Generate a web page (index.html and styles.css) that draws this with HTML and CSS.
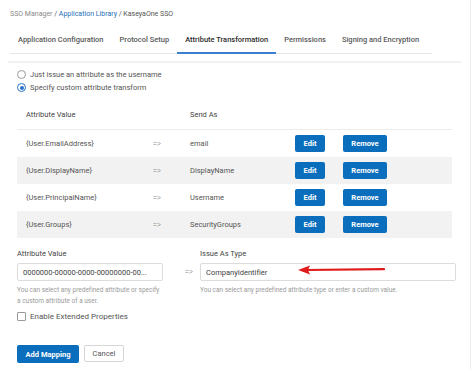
FILE: index.html
```html
<!DOCTYPE html>
<html lang="en">
<head>
    <meta charset="UTF-8">
    <title>KaseyaOne SSO - Attribute Transformation</title>
    <meta name="viewport" content="width=device-width,initial-scale=1">
    <link rel="stylesheet" href="styles.css">
</head>
<body>
    <div class="page">
        <div class="breadcrumb">
            <span class="crumb-muted">SSO Manager</span> /
            <a href="#">Application Library</a> /
            <span>KaseyaOne SSO</span>
        </div>

        <ul class="tabs">
            <li><a href="#">Application Configuration</a></li>
            <li><a href="#">Protocol Setup</a></li>
            <li class="active"><a href="#">Attribute Transformation</a></li>
            <li><a href="#">Permissions</a></li>
            <li><a href="#">Signing and Encryption</a></li>
        </ul>

        <div class="panel">
            <div class="options">
                <label class="radio"><span class="radio-dot"></span>Just issue an attribute as the username</label>
                <label class="radio"><span class="radio-dot checked"></span>Specify custom attribute transform</label>
            </div>

            <div class="mapping-table">
                <div class="map-row head">
                    <div>Attribute Value</div>
                    <div></div>
                    <div>Send As</div>
                    <div></div>
                    <div></div>
                </div>
                <div class="map-row">
                    <div>{User.EmailAddress}</div>
                    <div class="arrow">=&gt;</div>
                    <div>email</div>
                    <div><button class="btn-blue">Edit</button></div>
                    <div><button class="btn-blue">Remove</button></div>
                </div>
                <div class="map-row">
                    <div>{User.DisplayName}</div>
                    <div class="arrow">=&gt;</div>
                    <div>DisplayName</div>
                    <div><button class="btn-blue">Edit</button></div>
                    <div><button class="btn-blue">Remove</button></div>
                </div>
                <div class="map-row">
                    <div>{User.PrincipalName}</div>
                    <div class="arrow">=&gt;</div>
                    <div>Username</div>
                    <div><button class="btn-blue">Edit</button></div>
                    <div><button class="btn-blue">Remove</button></div>
                </div>
                <div class="map-row">
                    <div>{User.Groups}</div>
                    <div class="arrow">=&gt;</div>
                    <div>SecurityGroups</div>
                    <div><button class="btn-blue">Edit</button></div>
                    <div><button class="btn-blue">Remove</button></div>
                </div>
            </div>

            <div class="mapping-form">
                <div class="field">
                    <label class="field-label">Attribute Value</label>
                    <div class="input">0000000-00000-0000-00000000-00...</div>
                    <p class="help">You can select any predefined attribute or specify a custom attribute of a user.</p>
                </div>
                <div class="arrow form-arrow">=&gt;</div>
                <div class="field">
                    <label class="field-label">Issue As Type</label>
                    <div class="input has-note">
                        CompanyIdentifier
                        <svg class="note-arrow" width="90" height="10" viewBox="0 0 90 10">
                            <line x1="8" y1="5" x2="86" y2="4.2" stroke="#e01b1b" stroke-width="2.2" stroke-linecap="round"/>
                            <polygon points="0,5 12,0.5 10,5 12,9.5" fill="#e01b1b"/>
                        </svg>
                    </div>
                    <p class="help">You can select any predefined attribute type or enter a custom value.</p>
                </div>
            </div>

            <label class="checkbox"><span class="check-box"></span>Enable Extended Properties</label>

            <div class="actions">
                <button class="btn-primary">Add Mapping</button>
                <button class="btn-cancel">Cancel</button>
            </div>
        </div>
    </div>
</body>
</html>
```

FILE: styles.css
```css
* {
    margin: 0;
    padding: 0;
    box-sizing: border-box;
}

body {
    font-family: Roboto, 'Liberation Sans', Arial, sans-serif;
    font-size: 7.5px;
    color: #555;
    background: #fff;
    font-variant-ligatures: none;
}

.page {
    width: 471px;
    min-height: 369px;
    border-right: 1px solid #ececec;
}

/* Breadcrumb */
.breadcrumb {
    padding: 10px 0 0 10px;
    font-size: 7px;
    color: #555;
    height: 30px;
}

.breadcrumb a {
    color: #1f6fb6;
    text-decoration: none;
}

.crumb-muted {
    color: #8a8a8a;
}

/* Tabs */
.tabs {
    display: flex;
    list-style: none;
    margin-left: 10px;
    width: 422px;
    border-bottom: 1px solid #e6e6e6;
}

.tabs li {
    flex: none;
    white-space: nowrap;
    padding: 4px 8px 0;
    height: 24px;
    border-bottom: 2px solid transparent;
    margin-bottom: -1px;
}

.tabs a {
    color: #5a5a5a;
    text-decoration: none;
    font-size: 7.5px;
    font-weight: 500;
    line-height: 12px;
}

.tabs li.active {
    border-bottom-color: #3a7fd0;
}

.tabs li.active a {
    color: #2b2b2b;
}

/* Panel */
.panel {
    margin: 7px 9px 0 8px;
    border-top: 2px solid #f1f1f1;
    padding: 7px 9px 0 9px;
}

.options {
    display: flex;
    flex-direction: column;
    gap: 4px;
}

.radio, .checkbox {
    display: flex;
    align-items: center;
    gap: 4px;
    color: #555;
    line-height: 9px;
}

.radio-dot {
    width: 9px;
    height: 9px;
    border: 1px solid #9a9a9a;
    border-radius: 50%;
    display: inline-block;
    position: relative;
}

.radio-dot.checked {
    border-color: #2a74c9;
}

.radio-dot.checked::after {
    content: '';
    position: absolute;
    top: 1.5px;
    left: 1.5px;
    width: 4px;
    height: 4px;
    border-radius: 50%;
    background: #2a74c9;
}

/* Mapping table */
.mapping-table {
    margin-top: 8px;
}

.map-row {
    display: grid;
    grid-template-columns: 127px 37px 105px 48px 1fr;
    align-items: center;
    height: 27px;
    padding-left: 9px;
    color: #555;
}

.map-row.head {
    height: 30px;
    color: #444;
    border-bottom: 1px solid #ececec;
}

.map-row:nth-child(odd):not(.head) {
    background: #f2f2f2;
}

.arrow {
    font-family: 'Liberation Sans', Arial, sans-serif;
    font-size: 6.5px;
    letter-spacing: 0.3px;
    color: #888;
}

.btn-blue {
    background: #0a6ebd;
    color: #fff;
    border: none;
    border-radius: 2px;
    font-family: inherit;
    font-size: 7.5px;
    font-weight: 700;
    height: 17px;
    padding: 0 8px;
    cursor: pointer;
}

.map-row .btn-blue {
    min-width: 30px;
}

.map-row div:last-child .btn-blue {
    width: 44px;
}

/* Form */
.mapping-form {
    display: grid;
    grid-template-columns: 146px 37px 256px;
    margin-top: 11px;
}

.field-label {
    display: block;
    color: #444;
    height: 14px;
}

.input {
    height: 18px;
    border: 1px solid #dcdcdc;
    border-radius: 2px;
    padding: 0 5px;
    display: flex;
    align-items: center;
    color: #444;
}

.has-note {
    position: relative;
}

.note-arrow {
    position: absolute;
    left: 97px;
    top: 1px;
}

.form-arrow {
    padding: 19px 0 0 22px;
}

.help {
    margin-top: 4px;
    font-size: 6.5px;
    line-height: 11px;
    color: #9a9a9a;
}

.checkbox {
    margin-top: 5px;
    font-size: 8px;
}

.check-box {
    width: 9px;
    height: 9px;
    border: 1px solid #9a9a9a;
    border-radius: 1px;
    display: inline-block;
}

/* Actions */
.actions {
    display: flex;
    gap: 5px;
    margin-top: 24px;
}

.btn-primary {
    background: #0a6ebd;
    color: #fff;
    border: none;
    border-radius: 2px;
    font-family: inherit;
    font-size: 7.5px;
    font-weight: 700;
    height: 18px;
    width: 62px;
}

.btn-cancel {
    background: #fff;
    color: #555;
    border: 1px solid #d6d6d6;
    border-radius: 2px;
    font-family: inherit;
    font-size: 7.5px;
    height: 17px;
    width: 40px;
}
```
